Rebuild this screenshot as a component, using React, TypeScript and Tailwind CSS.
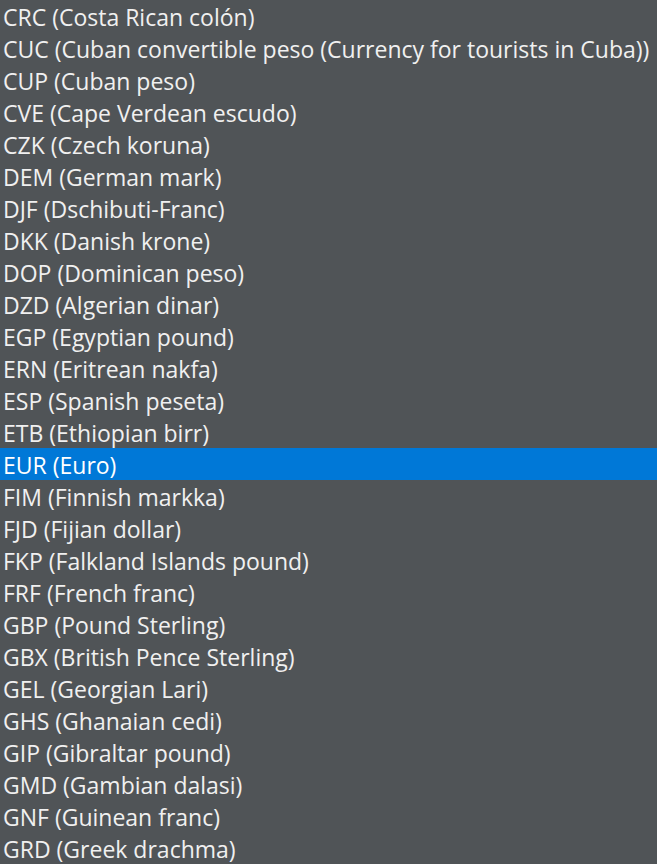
import React from "react";

const items = [
  "CRC (Costa Rican colón)",
  "CUC (Cuban convertible peso (Currency for tourists in Cuba))",
  "CUP (Cuban peso)",
  "CVE (Cape Verdean escudo)",
  "CZK (Czech koruna)",
  "DEM (German mark)",
  "DJF (Dschibuti-Franc)",
  "DKK (Danish krone)",
  "DOP (Dominican peso)",
  "DZD (Algerian dinar)",
  "EGP (Egyptian pound)",
  "ERN (Eritrean nakfa)",
  "ESP (Spanish peseta)",
  "ETB (Ethiopian birr)",
  "EUR (Euro)",
  "FIM (Finnish markka)",
  "FJD (Fijian dollar)",
  "FKP (Falkland Islands pound)",
  "FRF (French franc)",
  "GBP (Pound Sterling)",
  "GBX (British Pence Sterling)",
  "GEL (Georgian Lari)",
  "GHS (Ghanaian cedi)",
  "GIP (Gibraltar pound)",
  "GMD (Gambian dalasi)",
  "GNF (Guinean franc)",
  "GRD (Greek drachma)",
];

export default function App() {
  return (
    <div
      className="w-[657px] h-[864px] overflow-hidden bg-[#505457] text-[#f0f0f0]"
      style={{ fontFamily: '"Open Sans", "Noto Sans", sans-serif' }}
    >
      <ul className="flex flex-col">
        {items.map((it) => (
          <li
            key={it}
            className={`h-[32px] flex items-center pl-[3px] pt-[2px] text-[23px] leading-none whitespace-nowrap ${
              it.startsWith("EUR") ? "bg-[#0078d7] text-white" : ""
            }`}
          >
            {it}
          </li>
        ))}
      </ul>
    </div>
  );
}
